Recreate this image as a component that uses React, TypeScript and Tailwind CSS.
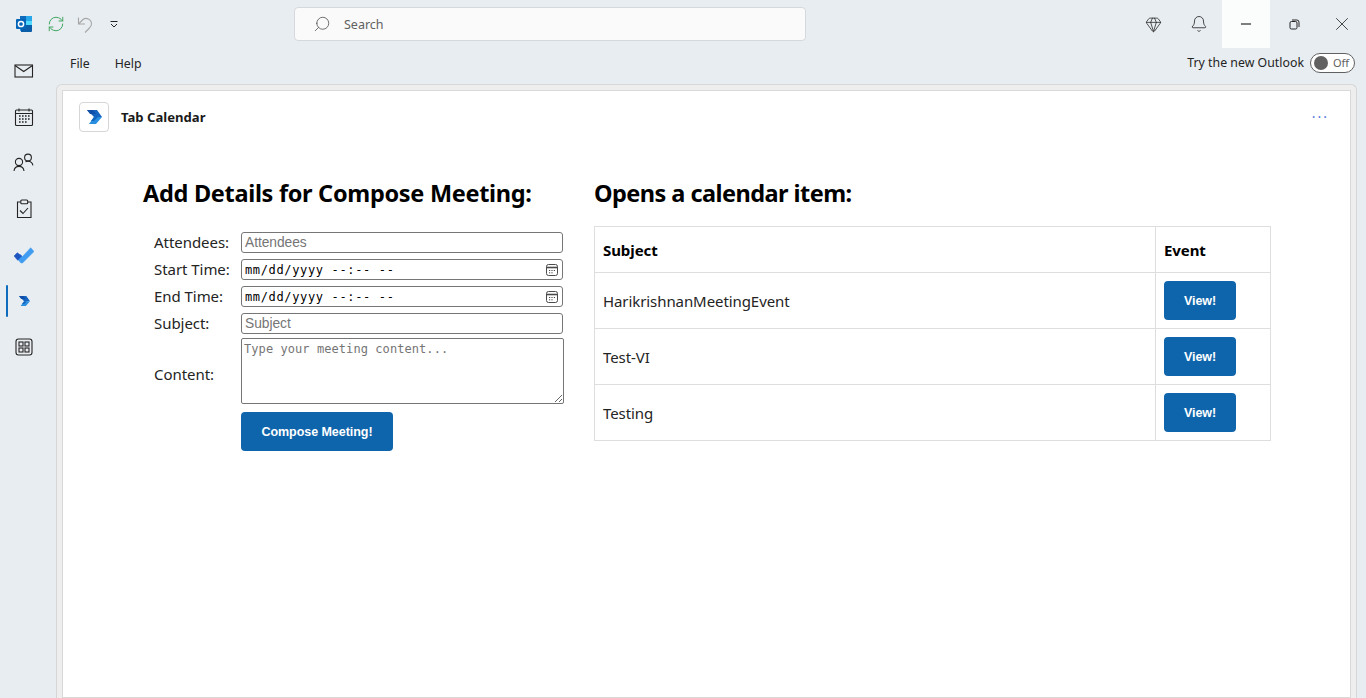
import React from 'react';
import { RefreshCw, Search, Bell, Minus, X, Gem } from 'lucide-react';

const FONT = "font-['Noto_Sans','Open_Sans',sans-serif]";

const OutlookLogo = () => (
  <svg width="18" height="18" viewBox="0 0 18 18">
    <rect x="5" y="1" width="12" height="15" rx="1" fill="#1490df" />
    <rect x="5" y="1" width="6" height="5" fill="#0f6cbd" />
    <rect x="11" y="1" width="6" height="5" fill="#28a8ea" />
    <rect x="11" y="6" width="6" height="5" fill="#50d9ff" />
    <path d="M6 10l11 0 0 6a1 1 0 0 1-1 1H6z" fill="#0a5da8" />
    <rect x="1" y="4" width="10" height="10" rx="1" fill="#0364b8" />
    <circle cx="6" cy="9" r="2.6" fill="none" stroke="#fff" strokeWidth="1.5" />
  </svg>
);

const ChevronMark = ({ width }: { width: number }) => (
  <svg width={width} height={(width * 14) / 15} viewBox="0 0 15 14">
    <polygon points="0,0 10,0 15,7 7,7" fill="#1464c0" />
    <polygon points="0,0 6,0 9,4 3,4" fill="#0f4fa8" />
    <polygon points="7,7 15,7 9,14 2,14" fill="#2a8fe0" />
    <polygon points="7,7 11,7 7,11 4,11" fill="#1167c0" />
  </svg>
);

const UndoIcon = () => (
  <svg width="16" height="18" viewBox="0 0 16 18" fill="none" stroke="#a6a6a6" strokeWidth="1.1">
    <path d="M1.5 1.5v6.5h6.5" />
    <path d="M1.5 8L6 3.5C9 1 14.5 3 14.5 8c0 2-1 3-2.5 4.5L8 16.5" />
  </svg>
);

const MailIcon = () => (
  <svg width="20" height="16" viewBox="0 0 20 16" fill="none" stroke="#242424" strokeWidth="1.1">
    <rect x="1" y="2" width="17.5" height="12" />
    <path d="M1 2.5l8.7 6 8.8-6" />
  </svg>
);

const CalendarIcon = () => (
  <svg width="20" height="20" viewBox="0 0 20 20" fill="none" stroke="#242424" strokeWidth="1.1">
    <rect x="1.5" y="3" width="17" height="15.5" rx="1" />
    <path d="M1.5 6.5h17M5 1.5v3M15 1.5v3" />
    <path d="M5 9h1.6M8 9h1.6M11 9h1.6M14 9h1.6M5 12h1.6M8 12h1.6M11 12h1.6M14 12h1.6M5 15h1.6M8 15h1.6M11 15h1.6" stroke="#242424" strokeWidth="1.5" />
  </svg>
);

const PeopleIcon = () => (
  <svg width="21" height="20" viewBox="0 0 21 20" fill="none" stroke="#242424" strokeWidth="1.1" className="-ml-[1px]">
    <circle cx="6" cy="9" r="3.6" />
    <path d="M1 18c.4-3 2.2-4.6 5-4.6s4.6 1.6 5 4.6" />
    <circle cx="15" cy="4.5" r="3.4" />
    <path d="M12.5 8.8c.8-.4 1.6-.6 2.5-.6 2.7 0 4.4 1.5 4.9 4.2" />
  </svg>
);

const TaskIcon = () => (
  <svg width="16" height="20" viewBox="0 0 16 20" fill="none" stroke="#242424" strokeWidth="1.1">
    <path d="M4.5 3H1.5v15.5h13.5V3h-3" />
    <rect x="4.8" y="1" width="6.9" height="3.8" rx="1" />
    <path d="M4 11.5l3 3 5-5.5" />
  </svg>
);

const TodoIcon = () => (
  <svg width="20" height="18" viewBox="0 0 20 18" strokeLinejoin="round">
    <polygon points="16.7,1.7 20,5.5 8.5,17 7,17 2.5,12 6,8.5 8.5,10.5" fill="#3f9cf0" stroke="#3f9cf0" strokeWidth="0.5" />
    <polygon points="0,10 3.3,6.7 7.7,10 3.7,14.3" fill="#1e55c0" stroke="#1e55c0" strokeWidth="0.5" />
  </svg>
);

const AppsIcon = () => (
  <svg width="18" height="18" viewBox="0 0 18 18" fill="none" stroke="#242424" strokeWidth="1.1">
    <rect x="1" y="1" width="16" height="16" rx="2.5" />
    <rect x="4" y="4" width="4" height="4" />
    <rect x="10" y="4" width="4" height="4" />
    <rect x="4" y="10" width="4" height="4" />
    <rect x="10" y="10" width="4" height="4" />
  </svg>
);

const RestoreIcon = () => (
  <svg width="11" height="11" viewBox="0 0 11 11" fill="none" stroke="#242424" strokeWidth="1">
    <rect x="1" y="2.5" width="7" height="7.5" rx="1.4" />
    <path d="M3 1h4.8A2.2 2.2 0 0 1 10 3.2V8" />
  </svg>
);

const QuickDropdown = () => (
  <svg width="8" height="7" viewBox="0 0 8 7" fill="none" stroke="#242424" strokeWidth="1">
    <path d="M0.5 0.5h7M1 3l3 3 3-3" />
  </svg>
);

const PickerIcon = () => (
  <svg width="12" height="12" viewBox="0 0 12 12" fill="none" stroke="#4a4a4a" strokeWidth="1">
    <rect x="0.5" y="0.5" width="11" height="11" rx="2" />
    <path d="M0.5 3.5h11" strokeWidth="1.6" />
    <path d="M3 6.5h1.2M5.4 6.5h1.2M7.8 6.5h1.2M3 8.8h1.2M5.4 8.8h1.2" />
  </svg>
);

const railItems = [
  { key: 'mail', icon: <MailIcon /> },
  { key: 'calendar', icon: <CalendarIcon /> },
  { key: 'people', icon: <PeopleIcon /> },
  { key: 'tasks', icon: <TaskIcon /> },
  { key: 'todo', icon: <TodoIcon /> },
  { key: 'tab', icon: <ChevronMark width={11} />, active: true },
  { key: 'apps', icon: <AppsIcon /> },
];

const meetings = ['HarikrishnanMeetingEvent', 'Test-VI', 'Testing'];

const fieldClass = "w-[322px] h-[21px] my-[3px] px-[3px] border border-[#767676] rounded-[3px] bg-white text-[13.8px] font-['Liberation_Sans',sans-serif] placeholder:text-[#757575] outline-none";
const dateClass = "w-[322px] h-[21px] my-[3px] pl-[3px] pr-[4px] border border-[#767676] rounded-[3px] bg-white flex items-center justify-between text-[12px] tracking-[0.65px] text-black font-['DejaVu_Sans_Mono',monospace] whitespace-pre";
const buttonClass = "bg-[#0f65ab] text-white font-bold text-[12.5px] pt-[1px] rounded-[4px] font-['Liberation_Sans',sans-serif]";

const DateField = () => (
  <div className={dateClass}>
    <span>mm/dd/yyyy --:-- --</span>
    <PickerIcon />
  </div>
);

export default function App() {
  return (
    <div className={`w-[1366px] h-[698px] overflow-hidden flex flex-col bg-[#e8edf1] text-[#242424] ${FONT}`}>
      {/* Title bar */}
      <div className="h-12 flex items-center shrink-0">
        <div className="w-[47px] pl-[15px] flex items-center"><OutlookLogo /></div>
        <RefreshCw className="w-[18px] h-[18px] text-[#3fa45b]" strokeWidth={1.3} />
        <div className="ml-[12px] mt-[1px]"><UndoIcon /></div>
        <div className="ml-[17px]"><QuickDropdown /></div>
        <div className="ml-[176px] w-[512px] h-[34px] bg-[#fafafa] border border-[#d5d8dc] rounded-[4px] flex items-center pl-[18px] mb-[1px]">
          <Search className="w-[18px] h-[18px] text-[#555] -scale-x-100" strokeWidth={1.1} />
          <span className="ml-[13px] mt-[3px] text-[12.5px] text-[#616161]">Search</span>
        </div>
        <div className="ml-auto flex items-center h-12">
          <Gem className="w-[17px] h-[17px] mr-[28px]" strokeWidth={1.1} />
          <Bell className="w-[18px] h-[18px] mr-[14px] -mt-[1px]" strokeWidth={1.1} />
          <div className="w-12 h-12 bg-[#fbfcfc] flex items-center justify-center"><Minus className="w-[16px] h-[16px] text-black" strokeWidth={1.5} /></div>
          <div className="w-12 h-12 flex items-center justify-center"><RestoreIcon /></div>
          <div className="w-12 h-12 flex items-center justify-center"><X className="w-[22px] h-[22px]" strokeWidth={0.9} /></div>
        </div>
      </div>

      <div className="flex-1 flex min-h-0">
        {/* App rail */}
        <div className="w-[56px] shrink-0 flex flex-col">
          {railItems.map((item) => (
            <div key={item.key} className="relative w-[48px] h-[46px] flex items-center justify-center">
              {item.active && <div className="absolute left-[6px] top-[7px] w-[2px] h-[32px] bg-[#0f6cbd] rounded" />}
              {item.icon}
            </div>
          ))}
        </div>

        <div className="flex-1 flex flex-col min-w-0">
          {/* Menu row */}
          <div className="h-[36px] shrink-0 flex items-center pb-[4px] text-[12.3px]">
            <span className="ml-[14px]">File</span>
            <span className="ml-[25px]">Help</span>
            <div className="ml-auto mr-[11px] mb-[2px] flex items-center">
              <span className="tracking-[0.02px]">Try the new Outlook</span>
              <div className="ml-[6px] w-[45px] h-[20px] border border-[#616161] rounded-full bg-white flex items-center pl-[3px]">
                <div className="w-[14px] h-[14px] rounded-full bg-[#616161]" />
                <span className="ml-[5px] text-[11px] text-[#616161]">Off</span>
              </div>
            </div>
          </div>

          {/* Add-in panel */}
          <div className="flex-1 mr-[9px] border border-b-0 border-[#d6d6d6] rounded-t-[6px] bg-[#eeeeee] px-[5px] pt-[5px] min-h-0">
            <div className="h-full bg-white border border-[#d9d9d9]">
              <div className="flex items-center h-[50px] pl-[16px] pr-[21px] pt-[1px]">
                <div className="w-[30px] h-[30px] border border-[#d6d6d6] rounded-[4px] flex items-center justify-center"><ChevronMark width={15} /></div>
                <span className="ml-[12px] mt-[3px] text-[13.1px] font-bold text-[#1a1a1a]">Tab Calendar</span>
                <span className="ml-auto text-[#5b7be1] text-[14px] tracking-[2px] leading-none">···</span>
              </div>

              <div className="flex pl-[80px] pt-[36px]">
                {/* Compose form */}
                <div className="w-[451px] shrink-0">
                  <h2 className="text-[23.5px] tracking-[-0.3px] leading-[32px] font-bold text-black whitespace-nowrap">Add Details for Compose Meeting:</h2>
                  <div className="mt-[20px] pl-[11px] grid grid-cols-[87px_1fr] items-center text-[15px] tracking-[-0.05px] text-[#242424]">
                    <label>Attendees:</label>
                    <input className={fieldClass} placeholder="Attendees" />
                    <label>Start Time:</label>
                    <DateField />
                    <label>End Time:</label>
                    <DateField />
                    <label>Subject:</label>
                    <input className={fieldClass} placeholder="Subject" />
                    <label className="pt-[8px]">Content:</label>
                    <textarea className="w-[323px] h-[66px] mt-[1px] px-[2px] py-[1px] border border-[#767676] rounded-[2px] bg-white text-[12px] tracking-[0.07px] font-['DejaVu_Sans_Mono',monospace] placeholder:text-[#757575] outline-none block" placeholder="Type your meeting content..." />
                    <div />
                    <button className={`${buttonClass} w-[152px] h-[39px] mt-[8px]`}>Compose Meeting!</button>
                  </div>
                </div>

                {/* Calendar items */}
                <div className="w-[677px] shrink-0">
                  <h2 className="text-[23.5px] tracking-[-0.55px] leading-[32px] font-bold text-black whitespace-nowrap">Opens a calendar item:</h2>
                  <table className="mt-[17px] w-[677px] border-collapse text-[15px] tracking-[-0.08px] text-[#242424]">
                    <thead>
                      <tr className="h-[46px]">
                        <th className="border border-[#dedede] text-left font-bold text-black pl-[8px] pt-[2px]">Subject</th>
                        <th className="w-[115px] border border-[#dedede] text-left font-bold text-black pl-[8px] pt-[2px]">Event</th>
                      </tr>
                    </thead>
                    <tbody>
                      {meetings.map((m) => (
                        <tr key={m} className="h-[56px]">
                          <td className="border border-[#dedede] pl-[8px] pt-[2px]">{m}</td>
                          <td className="border border-[#dedede] pl-[8px]">
                            <button className={`${buttonClass} block w-[72px] h-[39px]`}>View!</button>
                          </td>
                        </tr>
                      ))}
                    </tbody>
                  </table>
                </div>
              </div>
            </div>
          </div>
        </div>
      </div>
    </div>
  );
}
